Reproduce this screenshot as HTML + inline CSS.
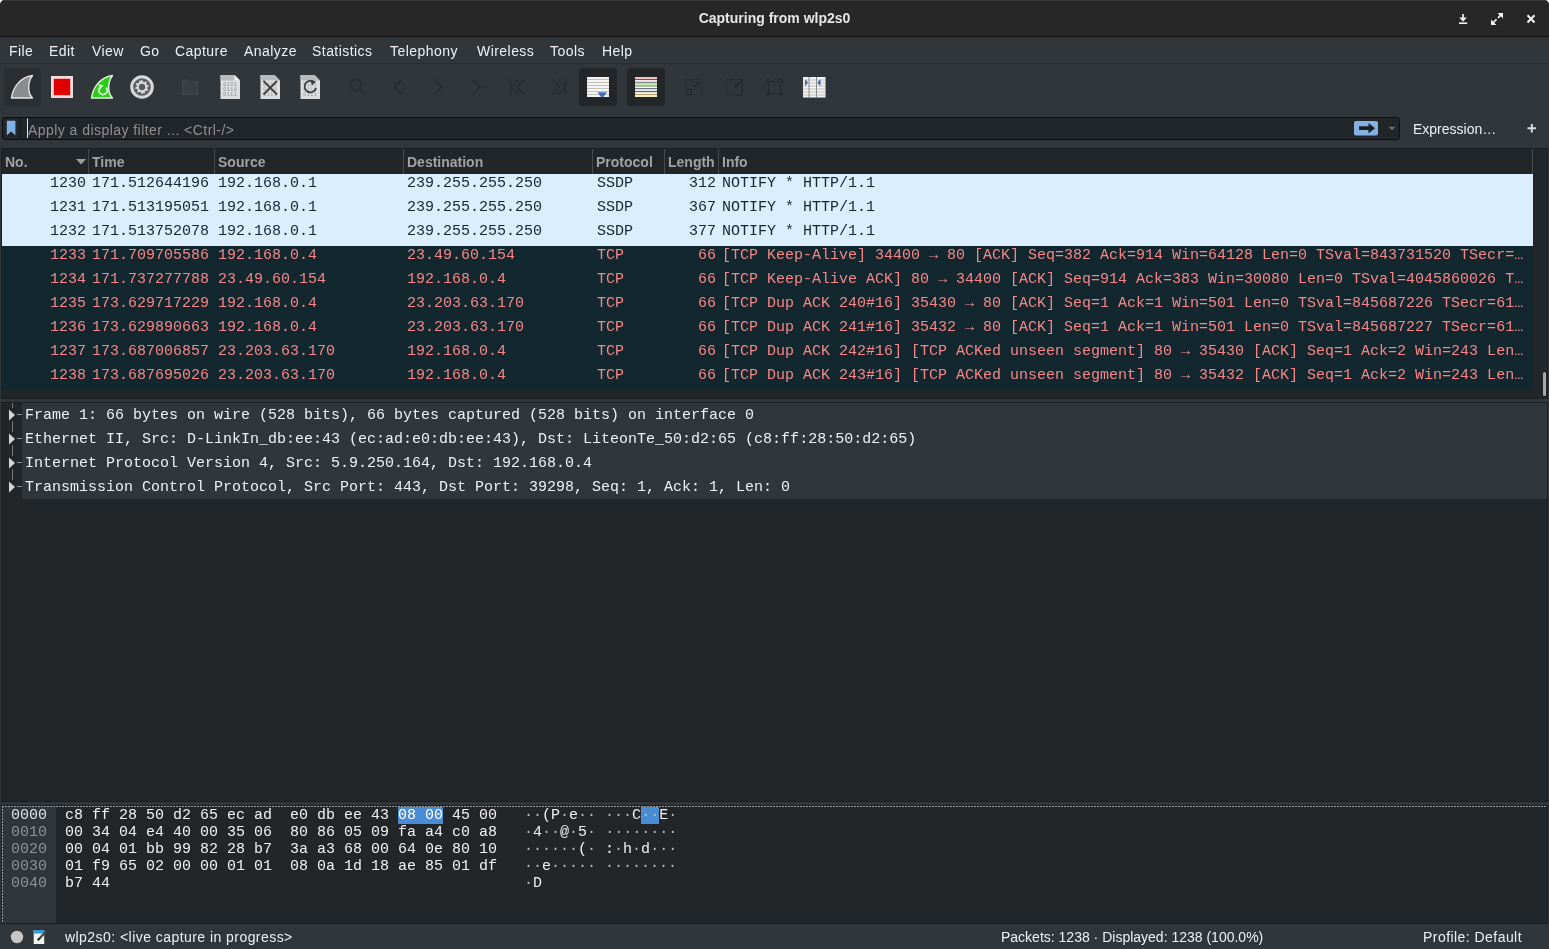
<!DOCTYPE html>
<html><head><meta charset="utf-8">
<style>
*{margin:0;padding:0;box-sizing:border-box}
span,.t,.hdr{will-change:transform}
html,body{width:1549px;height:949px;overflow:hidden;background:#ffffff}
body{position:relative;font-family:"Liberation Sans",sans-serif;}
.abs{position:absolute}
#win{position:absolute;left:0;top:0;width:1549px;height:949px;background:#31363b;border-radius:5px 5px 0 0;overflow:hidden}
#title{position:absolute;left:0;top:0;width:1549px;height:37px;background:#272727;border-bottom:1px solid #0e0e0e;border-top:1px solid #383838}
#title .t{position:absolute;left:0;width:1549px;top:9px;text-align:center;color:#e6e6e6;font-weight:bold;font-size:14px}
#menu{position:absolute;left:0;top:37px;width:1549px;height:27px;background:#31363b;border-bottom:1px solid #2b2f33}
#menu span{position:absolute;top:6px;color:#eff0f1;font-size:14px;letter-spacing:0.45px}
#toolbar{position:absolute;left:0;top:64px;width:1549px;height:48px}
.mono{font-family:"Liberation Mono",monospace;font-size:15px}
#filter{position:absolute;left:2px;top:117px;width:1398px;height:23px;background:#232629;border:1px solid #0e0f11;border-radius:3px}
#plist{position:absolute;left:1px;top:148px;width:1547px;height:251px;background:#232629;border:1px solid #1d2023}
.hdr{position:absolute;top:5px;color:#a0a2a4;font-weight:bold;font-size:14px}
.row{position:absolute;left:0;width:1531px;height:24px;white-space:pre;font-family:"Liberation Mono",monospace;font-size:15px}
.row span{position:absolute;top:1px}
.ssdp{background:#daeeff;color:#12272e}
.tcp{background:#12272e;color:#f78787}
#details{position:absolute;left:1px;top:402px;width:1547px;height:400px;background:#232629;border:1px solid #1d2023}
.drow{position:absolute;left:20px;width:1525px;height:24px;background:#31363b;color:#eff0f1;white-space:pre;font-family:"Liberation Mono",monospace;font-size:15px}
.drow span{position:absolute;left:3px;top:4px}
#hex{position:absolute;left:1px;top:805px;width:1547px;height:119px;background:#232629;border:1px solid #1d2023}
.dashh{position:absolute;height:1px;background:repeating-linear-gradient(90deg,#9b9d9f 0 2px,transparent 2px 3px)}
.dashv{position:absolute;width:1px;background:repeating-linear-gradient(180deg,#9b9d9f 0 2px,transparent 2px 3px)}
.hrow{position:absolute;left:1px;width:1543px;height:17px;white-space:pre;font-family:"Liberation Mono",monospace;font-size:15px;color:#eff0f1}
.hrow span{position:absolute;top:0px}
.off{left:8px;color:#8e9194}
.off0{color:#e0e1e2}
.dim{color:#b8babc;font-style:normal}
.hlt{font-weight:normal;color:#ffffff}
.hx{left:62px}
.asc{left:521px}
#status{position:absolute;left:0;top:924px;width:1549px;height:25px;background:#31363b}
#status span{position:absolute;top:5px;color:#eff0f1;font-size:14px}
</style></head><body>
<div id="win">
 <div id="title"><div class="t">Capturing from wlp2s0</div>
 <svg class="abs" style="left:1440px;top:0" width="109" height="36">
  <path d="M23 13 v5" stroke="#f2f2f2" stroke-width="1.7"/>
  <path d="M19.2 16.6 h7.6 l-3.8 4.2 z" fill="#f2f2f2"/>
  <rect x="19" y="21.4" width="8.2" height="1.6" fill="#f2f2f2"/>
  <path d="M52.8 22 L56.5 18.3 M58 16.8 L61.5 13.3" stroke="#f2f2f2" stroke-width="1.7"/>
  <path d="M57.5 12 h5.5 v5.5 z M51 18.5 v5.5 h5.5 z" fill="#f2f2f2"/>
  <path d="M87.5 14.3 L94.5 21.5 M94.5 14.3 L87.5 21.5" stroke="#f2f2f2" stroke-width="2"/>
 </svg>
 </div>
 <div id="menu">
  <span style="left:9px">File</span>
  <span style="left:49px">Edit</span>
  <span style="left:92px">View</span>
  <span style="left:140px">Go</span>
  <span style="left:175px">Capture</span>
  <span style="left:244px">Analyze</span>
  <span style="left:312px">Statistics</span>
  <span style="left:390px">Telephony</span>
  <span style="left:477px">Wireless</span>
  <span style="left:550px">Tools</span>
  <span style="left:602px">Help</span>
 </div>
 <svg class="abs" style="left:0;top:0" width="900" height="112" viewBox="0 0 900 112">
 <rect x="4" y="68" width="36.5" height="38" rx="3" fill="#2a2e31"/>
 <path d="M11.5 98 C13 87 20 77.5 32.5 75.5 C29 80 28.3 85 28.8 90 C29.2 94 30.8 96.5 32.5 98 Z" fill="#8a8d90" stroke="#e2e2e2" stroke-width="1.4" stroke-linejoin="round"/>
 <rect x="52.4" y="77.4" width="19.2" height="19.2" fill="#e00000" stroke="#f4dcdc" stroke-width="2.8"/>
 <path d="M91.5 98 C93 87 100 77.5 112.5 75.5 C109 80 108.3 85 108.8 90 C109.2 94 110.8 96.5 112.5 98 Z" fill="#2ccc1a" stroke="#dff2dc" stroke-width="1.4" stroke-linejoin="round"/>
 <path d="M106.2 87.6 A4.2 4.2 0 1 1 99.8 87.6" fill="none" stroke="#d6f3d0" stroke-width="1.9"/>
 <path d="M98.2 84.2 L103.6 85.2 L100.2 89.6 Z" fill="#d6f3d0"/>
 <circle cx="142" cy="87" r="10.3" fill="#5a5d60" stroke="#d8d8d8" stroke-width="3"/>
 <g fill="#dadada">
  <circle cx="142" cy="87" r="5.4"/>
  <rect x="141.1" y="80.2" width="1.8" height="13.6" rx="0.5" transform="rotate(0 142 87)"/><rect x="141.1" y="80.2" width="1.8" height="13.6" rx="0.5" transform="rotate(40 142 87)"/><rect x="141.1" y="80.2" width="1.8" height="13.6" rx="0.5" transform="rotate(80 142 87)"/><rect x="141.1" y="80.2" width="1.8" height="13.6" rx="0.5" transform="rotate(120 142 87)"/><rect x="141.1" y="80.2" width="1.8" height="13.6" rx="0.5" transform="rotate(160 142 87)"/>
 </g>
 <circle cx="142" cy="87" r="3.2" fill="#5a5d60"/>
 <path d="M182.5 80 h5 l1.5 1.8 h8.5 v12.7 h-15 z" fill="#3a3e42" stroke="#45494d" stroke-width="1"/>
 <g>
  <path d="M220.5 75 h14 l5.5 5.5 v18.5 h-19.5 z" fill="#dcdee0"/>
  <path d="M220.5 75 h14 l5.5 5.5 v0 h-19.5 z" fill="#b8babc"/>
  <path d="M234.5 75 v5.5 h5.5" fill="#f0f0f0"/>
  <text x="230.2" y="86" font-family="Liberation Mono" font-size="5" fill="#8a8c8e" text-anchor="middle" letter-spacing="0.5">0101</text>
  <text x="230.2" y="91" font-family="Liberation Mono" font-size="5" fill="#8a8c8e" text-anchor="middle" letter-spacing="0.5">0110</text>
  <text x="230.2" y="96" font-family="Liberation Mono" font-size="5" fill="#8a8c8e" text-anchor="middle" letter-spacing="0.5">0111</text>
 </g>
 <g>
  <path d="M260.5 75 h14 l5.5 5.5 v18.5 h-19.5 z" fill="#dcdee0"/>
  <path d="M260.5 75 h14 l5.5 5.5 v0 h-19.5 z" fill="#b8babc"/>
  <text x="270.2" y="86" font-family="Liberation Mono" font-size="5" fill="#9a9c9e" text-anchor="middle" letter-spacing="0.5">0101</text>
  <text x="270.2" y="91" font-family="Liberation Mono" font-size="5" fill="#9a9c9e" text-anchor="middle" letter-spacing="0.5">0110</text>
  <text x="270.2" y="96" font-family="Liberation Mono" font-size="5" fill="#9a9c9e" text-anchor="middle" letter-spacing="0.5">0111</text>
  <path d="M263.5 81 L277 94.5 M277 81 L263.5 94.5" stroke="#3c3e40" stroke-width="1.8"/>
 </g>
 <g>
  <path d="M300.5 75 h14 l5.5 5.5 v18.5 h-19.5 z" fill="#dcdee0"/>
  <path d="M300.5 75 h14 l5.5 5.5 v0 h-19.5 z" fill="#b8babc"/>
  <text x="310.2" y="86" font-family="Liberation Mono" font-size="5" fill="#9a9c9e" text-anchor="middle" letter-spacing="0.5">0101</text>
  <text x="310.2" y="91" font-family="Liberation Mono" font-size="5" fill="#9a9c9e" text-anchor="middle" letter-spacing="0.5">0110</text>
  <text x="310.2" y="96" font-family="Liberation Mono" font-size="5" fill="#9a9c9e" text-anchor="middle" letter-spacing="0.5">0111</text>
  <path d="M314.5 82.5 A5.8 5.8 0 1 0 316 88" fill="none" stroke="#3c3e40" stroke-width="1.8"/>
  <path d="M310.5 80 L316 81.5 L312 85.5 Z" fill="#3c3e40"/>
 </g>
 <g fill="none" stroke="#25292c" stroke-width="1.1">
  <circle cx="355.5" cy="84.8" r="5.3"/>
  <path d="M359.3 88.6 L365.5 94.5"/>
  <path d="M402 79.5 L394.3 87 L402 94.5"/>
  <path d="M434 79.5 L441.7 87 L434 94.5"/>
  <path d="M472.5 79.5 L480.2 87 L472.5 94.5"/>
  <path d="M510.5 79 V95 M518.2 79.5 L511.5 87 L518.2 94.5 M524.4 79.5 L517.2 87 L524.4 94.5"/>
  <path d="M565.5 79 V95 M552.3 79.5 L559 87 L552.3 94.5 M558.5 79.5 L565.2 87 L558.5 94.5"/>
 </g>
 <circle cx="483" cy="87" r="0.9" fill="#25292c"/>
 <rect x="579" y="68" width="38" height="38" rx="3.5" fill="#232629"/>
 <rect x="627" y="68" width="38" height="38" rx="3.5" fill="#232629"/>
 <rect x="587" y="77" width="22" height="20" fill="#f4f4f4"/>
 <g stroke="#b8b4ac" stroke-width="0.8">
  <path d="M587 79.5 h22 M587 82.5 h22 M587 85.5 h22 M587 88.5 h22 M587 91.5 h22 M587 94.5 h22"/>
 </g>
 <path d="M597.5 92.3 h9.5 l-3.2 4.2 q-1.5 2 -3.1 0 z" fill="#3f6fb5"/>
 <rect x="635" y="77" width="22" height="20" fill="#f7f7f7"/>
 <rect x="635" y="77" width="22" height="2.5" fill="#f4c4c0"/>
 <rect x="635" y="79" width="22" height="1" fill="#8a4a48"/>
 <rect x="635" y="80.5" width="22" height="1.5" fill="#f6d0cc"/>
 <rect x="635" y="82.3" width="22" height="1" fill="#4a6068"/>
 <rect x="635" y="83.5" width="22" height="2" fill="#c6eab0"/>
 <rect x="635" y="85.5" width="22" height="1" fill="#6a8850"/>
 <rect x="635" y="88.2" width="22" height="1" fill="#445868"/>
 <rect x="635" y="89.5" width="22" height="1.5" fill="#e4e4f6"/>
 <rect x="635" y="91.1" width="22" height="1" fill="#5a4a60"/>
 <rect x="635" y="92.3" width="22" height="1.8" fill="#f6ecc4"/>
 <rect x="635" y="94.2" width="22" height="1" fill="#9a8a50"/>
 <rect x="635" y="95.3" width="22" height="1.7" fill="#f8f0c8"/>
 <g fill="none" stroke="#25292c" stroke-width="1.1">
  <path d="M686 79.5 h16 v15.5 h-16 z" stroke-dasharray="1.6 1.6"/>
  <rect x="686.5" y="89.5" width="5" height="5"/>
  <path d="M694 87 L699 82 M696 82 h3 v3"/>
  <path d="M726.5 79.5 h15.5 v15.5 h-15.5 z" stroke-dasharray="1.6 1.6"/>
  <path d="M730 79.5 h12 v15.5 h-6"/>
  <path d="M740 82 L735 87 M735 84 v3 h3"/>
  <path d="M766.5 83 v-3.5 h3.5 M779 79.5 h3.5 v3.5 M782.5 91.5 v3.5 h-3.5 M770 95 h-3.5 v-3.5"/>
  <rect x="768.5" y="81.5" width="12" height="12"/>
 </g>
 <rect x="803" y="77" width="22.5" height="20.5" fill="#f4f4f4"/>
 <g stroke="#b8b4ac" stroke-width="0.8">
  <path d="M803 80 h22.5 M803 83 h22.5 M803 86 h22.5 M803 89 h22.5 M803 92 h22.5 M803 95 h22.5"/>
 </g>
 <path d="M809 77 V97.5 M816.5 77 V97.5" stroke="#8c8c8c" stroke-width="1"/>
 <path d="M805 79.5 Q810.5 82.6 805 85.8 Z M820.5 79.5 Q815 82.6 820.5 85.8 Z" fill="#3a6db8"/>
</svg>

 <div id="filter"></div>
 <svg class="abs" style="left:0;top:112px" width="30" height="30"><path d="M6.8 8.7 h8.6 v14.5 l-4.3 -3.6 l-4.3 3.6 z" fill="#7fb0e4"/><rect x="19.5" y="6" width="1" height="22" fill="#17191b"/><rect x="27" y="6.5" width="1" height="19.5" fill="#e8e8e8"/></svg>
 <span class="abs" id="ph" style="left:28px;top:122px;font-size:14px;color:#8e9092;white-space:pre;letter-spacing:0.45px">Apply a display filter ... &lt;Ctrl-/&gt;</span>
 <svg class="abs" style="left:1350px;top:112px" width="199" height="36">
  <rect x="4" y="9" width="24" height="14.5" rx="2" fill="#84b0e2"/>
  <path d="M9 14.3 h9.5 v-3.3 l6.5 5.2 l-6.5 5.2 v-3.3 h-9.5 z" fill="#1d2024"/>
  <path d="M38.5 14.8 h7 l-3.5 3.5 z" fill="#6b6e71"/>
  <path d="M181.8 12 v8.5 M177.5 16.25 h8.5" stroke="#dcdcdc" stroke-width="2"/>
 </svg>
 <span class="abs" id="expr" style="left:1413px;top:121px;font-size:14px;color:#eff0f1;white-space:pre">Expression…</span>
 <div id="plist">
  <div class="hdr" style="left:3px">No.</div>
  <svg class="abs" style="left:73px;top:9px" width="12" height="8"><path d="M1 1 H11 L6 6.5 Z" fill="#9c9ea0"/></svg>
  <div class="hdr" style="left:90px">Time</div>
  <div class="hdr" style="left:216px">Source</div>
  <div class="hdr" style="left:405px">Destination</div>
  <div class="hdr" style="left:594px">Protocol</div>
  <div class="hdr" style="left:666px">Length</div>
  <div class="hdr" style="left:720px">Info</div>
  <div class="abs" style="left:86px;top:0;width:1px;height:25px;background:#464a4e"></div>
  <div class="abs" style="left:212px;top:0;width:1px;height:25px;background:#464a4e"></div>
  <div class="abs" style="left:401px;top:0;width:1px;height:25px;background:#464a4e"></div>
  <div class="abs" style="left:590px;top:0;width:1px;height:25px;background:#464a4e"></div>
  <div class="abs" style="left:662px;top:0;width:1px;height:25px;background:#464a4e"></div>
  <div class="abs" style="left:716px;top:0;width:1px;height:25px;background:#464a4e"></div>
  <div class="abs" style="left:1530px;top:0;width:1px;height:25px;background:#464a4e"></div>
  <div class="row ssdp" style="top:25px"><span style="right:1447px">1230</span><span style="left:90px">171.512644196</span><span style="left:216px">192.168.0.1</span><span style="left:405px">239.255.255.250</span><span style="left:595px">SSDP</span><span style="right:817px">312</span><span style="left:720px">NOTIFY * HTTP/1.1</span></div>
  <div class="row ssdp" style="top:49px"><span style="right:1447px">1231</span><span style="left:90px">171.513195051</span><span style="left:216px">192.168.0.1</span><span style="left:405px">239.255.255.250</span><span style="left:595px">SSDP</span><span style="right:817px">367</span><span style="left:720px">NOTIFY * HTTP/1.1</span></div>
  <div class="row ssdp" style="top:73px"><span style="right:1447px">1232</span><span style="left:90px">171.513752078</span><span style="left:216px">192.168.0.1</span><span style="left:405px">239.255.255.250</span><span style="left:595px">SSDP</span><span style="right:817px">377</span><span style="left:720px">NOTIFY * HTTP/1.1</span></div>
  <div class="row tcp" style="top:97px"><span style="right:1447px">1233</span><span style="left:90px">171.709705586</span><span style="left:216px">192.168.0.4</span><span style="left:405px">23.49.60.154</span><span style="left:595px">TCP</span><span style="right:817px">66</span><span style="left:720px">[TCP Keep-Alive] 34400 → 80 [ACK] Seq=382 Ack=914 Win=64128 Len=0 TSval=843731520 TSecr=…</span></div>
  <div class="row tcp" style="top:121px"><span style="right:1447px">1234</span><span style="left:90px">171.737277788</span><span style="left:216px">23.49.60.154</span><span style="left:405px">192.168.0.4</span><span style="left:595px">TCP</span><span style="right:817px">66</span><span style="left:720px">[TCP Keep-Alive ACK] 80 → 34400 [ACK] Seq=914 Ack=383 Win=30080 Len=0 TSval=4045860026 T…</span></div>
  <div class="row tcp" style="top:145px"><span style="right:1447px">1235</span><span style="left:90px">173.629717229</span><span style="left:216px">192.168.0.4</span><span style="left:405px">23.203.63.170</span><span style="left:595px">TCP</span><span style="right:817px">66</span><span style="left:720px">[TCP Dup ACK 240#16] 35430 → 80 [ACK] Seq=1 Ack=1 Win=501 Len=0 TSval=845687226 TSecr=61…</span></div>
  <div class="row tcp" style="top:169px"><span style="right:1447px">1236</span><span style="left:90px">173.629890663</span><span style="left:216px">192.168.0.4</span><span style="left:405px">23.203.63.170</span><span style="left:595px">TCP</span><span style="right:817px">66</span><span style="left:720px">[TCP Dup ACK 241#16] 35432 → 80 [ACK] Seq=1 Ack=1 Win=501 Len=0 TSval=845687227 TSecr=61…</span></div>
  <div class="row tcp" style="top:193px"><span style="right:1447px">1237</span><span style="left:90px">173.687006857</span><span style="left:216px">23.203.63.170</span><span style="left:405px">192.168.0.4</span><span style="left:595px">TCP</span><span style="right:817px">66</span><span style="left:720px">[TCP Dup ACK 242#16] [TCP ACKed unseen segment] 80 → 35430 [ACK] Seq=1 Ack=2 Win=243 Len…</span></div>
  <div class="row tcp" style="top:217px"><span style="right:1447px">1238</span><span style="left:90px">173.687695026</span><span style="left:216px">23.203.63.170</span><span style="left:405px">192.168.0.4</span><span style="left:595px">TCP</span><span style="right:817px">66</span><span style="left:720px">[TCP Dup ACK 243#16] [TCP ACKed unseen segment] 80 → 35432 [ACK] Seq=1 Ack=2 Win=243 Len…</span></div>
  <div class="abs" style="left:1541px;top:223px;width:3px;height:24px;background:#a6a8aa;border-radius:1.5px"></div>
 </div>
 <div id="details">
  <div class="abs" style="left:10px;top:0px;width:1px;height:5px;background:#75787b"></div><div class="abs" style="left:10px;top:18px;width:1px;height:11px;background:#75787b"></div><div class="abs" style="left:10px;top:42px;width:1px;height:11px;background:#75787b"></div><div class="abs" style="left:10px;top:66px;width:1px;height:11px;background:#75787b"></div>
  <div class="drow" style="top:0px"><span>Frame 1: 66 bytes on wire (528 bits), 66 bytes captured (528 bits) on interface 0</span></div>
  <svg class="abs" style="left:0;top:0px" width="21" height="24"><path d="M7 6.5 L13 12 L7 17.5 Z" fill="#d6d6d6"/><path d="M15 11.5 H20" stroke="#8a8a8a" stroke-width="1"/></svg>
  <div class="drow" style="top:24px"><span>Ethernet II, Src: D-LinkIn_db:ee:43 (ec:ad:e0:db:ee:43), Dst: LiteonTe_50:d2:65 (c8:ff:28:50:d2:65)</span></div>
  <svg class="abs" style="left:0;top:24px" width="21" height="24"><path d="M7 6.5 L13 12 L7 17.5 Z" fill="#d6d6d6"/><path d="M15 11.5 H20" stroke="#8a8a8a" stroke-width="1"/></svg>
  <div class="drow" style="top:48px"><span>Internet Protocol Version 4, Src: 5.9.250.164, Dst: 192.168.0.4</span></div>
  <svg class="abs" style="left:0;top:48px" width="21" height="24"><path d="M7 6.5 L13 12 L7 17.5 Z" fill="#d6d6d6"/><path d="M15 11.5 H20" stroke="#8a8a8a" stroke-width="1"/></svg>
  <div class="drow" style="top:72px"><span>Transmission Control Protocol, Src Port: 443, Dst Port: 39298, Seq: 1, Ack: 1, Len: 0</span></div>
  <svg class="abs" style="left:0;top:72px" width="21" height="24"><path d="M7 6.5 L13 12 L7 17.5 Z" fill="#d6d6d6"/><path d="M15 11.5 H20" stroke="#8a8a8a" stroke-width="1"/></svg>
 </div>
 <div id="hex">
  <div class="abs" style="left:0;top:0;width:54px;height:117px;background:#31363b"></div>
  <div class="dashh" style="left:0;top:0;width:1545px"></div>
  <div class="dashv" style="left:0;top:0;height:116px"></div>
  <div class="abs" style="left:396px;top:1px;width:45px;height:17px;background:#4a8bd6"></div>
  <div class="abs" style="left:639px;top:1px;width:18px;height:17px;background:#4a8bd6"></div>
  <div class="hrow" style="top:1px"><span class="off off0">0000</span><span class="hx">c8 ff 28 50 d2 65 ec ad  e0 db ee 43 <b class="hlt">08 00</b> 45 00</span><span class="asc"><i class="dim">··</i>(P<i class="dim">·</i>e<i class="dim">··</i> <i class="dim">···</i>C<i class="dim">··</i>E<i class="dim">·</i></span></div>
  <div class="hrow" style="top:18px"><span class="off">0010</span><span class="hx">00 34 04 e4 40 00 35 06  80 86 05 09 fa a4 c0 a8</span><span class="asc"><i class="dim">·</i>4<i class="dim">··</i>@<i class="dim">·</i>5<i class="dim">·</i> <i class="dim">········</i></span></div>
  <div class="hrow" style="top:35px"><span class="off">0020</span><span class="hx">00 04 01 bb 99 82 28 b7  3a a3 68 00 64 0e 80 10</span><span class="asc"><i class="dim">······</i>(<i class="dim">·</i> :<i class="dim">·</i>h<i class="dim">·</i>d<i class="dim">···</i></span></div>
  <div class="hrow" style="top:52px"><span class="off">0030</span><span class="hx">01 f9 65 02 00 00 01 01  08 0a 1d 18 ae 85 01 df</span><span class="asc"><i class="dim">··</i>e<i class="dim">·····</i> <i class="dim">········</i></span></div>
  <div class="hrow" style="top:69px"><span class="off">0040</span><span class="hx">b7 44</span><span class="asc"><i class="dim">·</i>D</span></div>
 </div>
 <div id="status">
  <svg class="abs" style="left:0;top:-1px" width="60" height="26">
   <circle cx="17" cy="14" r="6.2" fill="#c6c6c6"/>
   <rect x="33.7" y="7" width="10.5" height="14" fill="#f2f2ee"/>
   <rect x="33.7" y="7" width="10.5" height="3.5" fill="#3a98d6"/>
   <path d="M38.5 16.5 L46 8.5" stroke="#3c4a4a" stroke-width="2.2"/>
   <circle cx="38.4" cy="16.6" r="1.1" fill="#000"/>
  </svg>
  <span style="left:65px;letter-spacing:0.45px">wlp2s0: &lt;live capture in progress&gt;</span>
  <span style="left:1001px">Packets: 1238 · Displayed: 1238 (100.0%)</span>
  <span style="left:1423px;letter-spacing:0.45px">Profile: Default</span>
 </div>
</div>
</body></html>
